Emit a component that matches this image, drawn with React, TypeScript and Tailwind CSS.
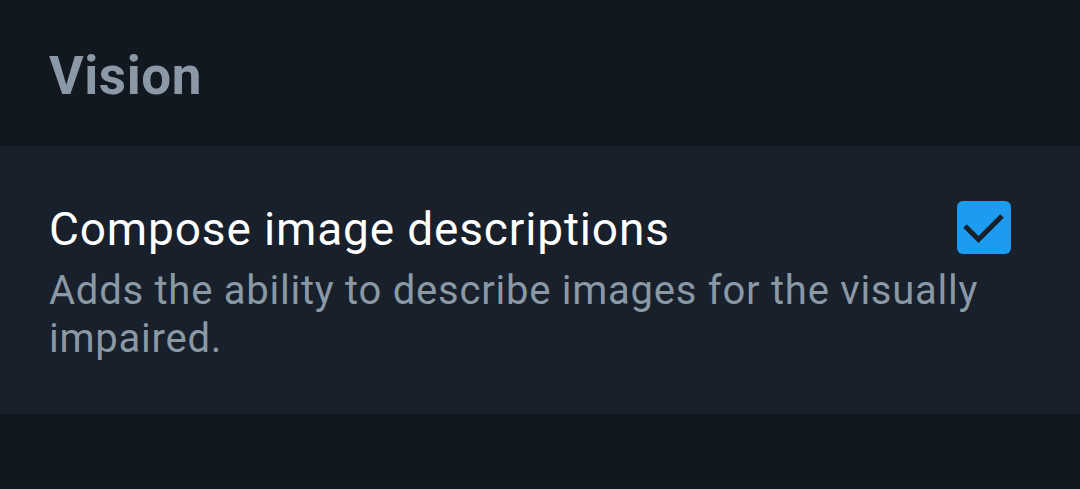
export default function App() {
  return (
    <div className="w-[1080px] h-[489px] bg-[#121820] font-['Roboto',sans-serif] overflow-hidden">
      <div className="h-[146px] pl-[49px] pt-[50px]">
        <h2 className="text-[53px] font-bold text-[#8b98a5] leading-[53px] tracking-[0.6px]">Vision</h2>
      </div>
      <div className="h-[268px] bg-[#18202b] pl-[49px] pr-[69px] pt-[53px]">
        <div className="flex items-start">
          <div className="flex-1 text-[46px] text-white leading-[60px] tracking-[0.85px]">Compose image descriptions</div>
          <div className="w-[54px] h-[53px] rounded-[6px] bg-[#1d9bf0] mt-[2px] shrink-0">
            <svg width="54" height="53" viewBox="0 0 54 53" fill="none">
              <path d="M8 25l13.5 13.5L45 15" stroke="#18202b" strokeWidth="5" strokeLinecap="butt" strokeLinejoin="miter" />
            </svg>
          </div>
        </div>
        <p className="mt-[8px] w-[962px] text-[40px] text-[#8b98a5] leading-[48px] tracking-[0.75px]">
          Adds the ability to describe images for the visually impaired.
        </p>
      </div>
    </div>
  );
}
